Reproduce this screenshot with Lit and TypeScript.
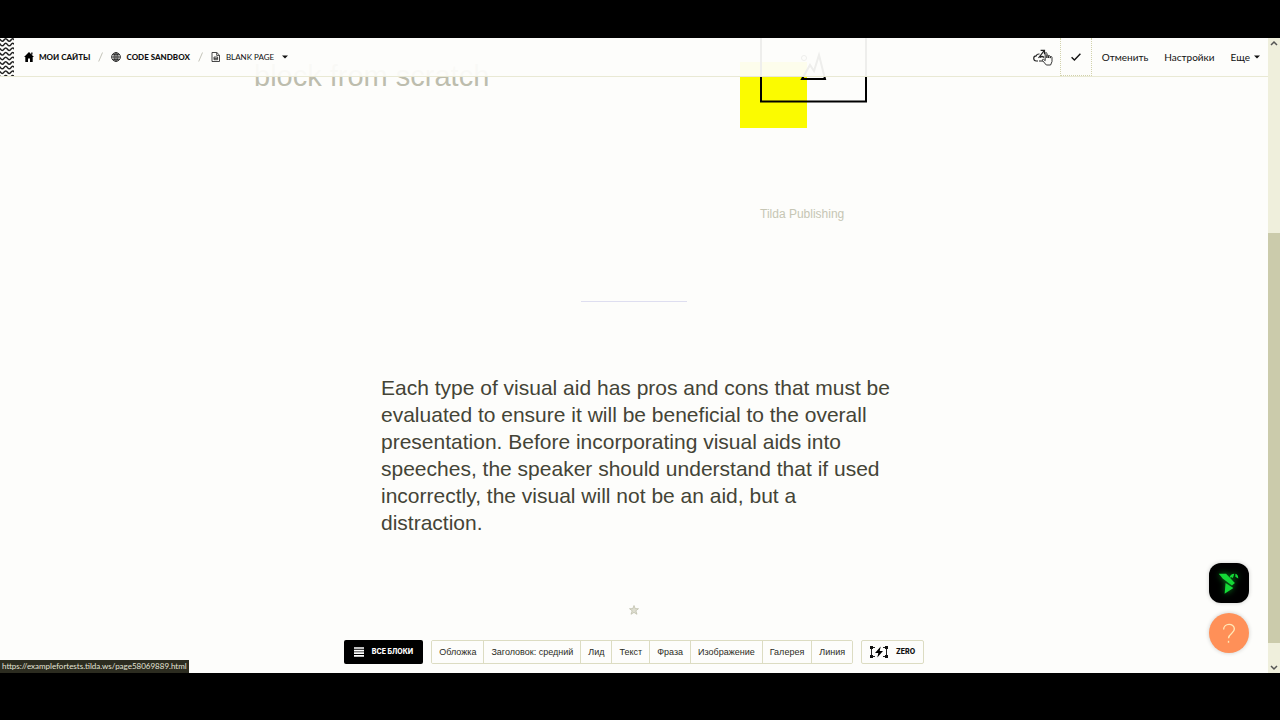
import { LitElement, html, css, svg } from "lit";
import { customElement } from "lit/decorators.js";

const BLOCKS = ["Обложка", "Заголовок: средний", "Лид", "Текст", "Фраза", "Изображение", "Галерея", "Линия"];

@customElement("top-bar")
class TopBar extends LitElement {
  static styles = css`
    :host { display: flex; align-items: stretch; height: 39px; background: rgba(253, 253, 251, 0.94); border-bottom: 1px solid #e9e9d4; box-sizing: border-box; font-family: Lato, "Open Sans", sans-serif; color: #111; }
    .waves { width: 14px; flex: none; }
    .crumbs { display: flex; align-items: center; padding-left: 10px; flex: 1; font-size: 8px; line-height: 12px; }
    a { color: inherit; text-decoration: none; display: flex; align-items: center; gap: 5px; text-transform: uppercase; }
    .strong { font-weight: 900; }
    .slash { width: 5px; height: 10px; margin: 0 8px; }
    button { font: inherit; color: inherit; background: none; border: 0; padding: 0; display: flex; align-items: center; justify-content: center; gap: 4px; }
    .pick { margin-left: 8px; }
    .actions { display: flex; align-items: stretch; font-size: 10px; line-height: 14px; padding-right: 8px; }
    .publish { width: 27px; justify-content: flex-start; }
    .done { width: 32px; border: 1px dotted #d2d2ac; border-top: 0; box-sizing: border-box; margin-right: 10px; }
    .menu { display: flex; gap: 16px; }
    svg { display: block; flex: none; }
  `;
  render() {
    const caret = html`<svg width="6" height="4" viewBox="0 0 6 4"><path d="M0 .5h6L3 3.5z" fill="#111"/></svg>`;
    const slash = html`<svg class="slash" viewBox="0 0 5 10"><path d="M.7 9.5L4.5.5" stroke="#b5b5a8" stroke-width=".8"/></svg>`;
    const rows = [...Array(9).keys()].map((i) => svg`<path d="M-3 ${i * 4.6 + 3}q1.700-3.500 3.500-1t3.500 0 3.500 0 3.500 0 3.500 0 3.500 0" />`);
    return html`
      <svg class="waves" viewBox="0 0 14 38" preserveAspectRatio="none"><g fill="none" stroke="#222" stroke-width="1.5">${rows}</g></svg>
      <nav class="crumbs">
        <a class="strong" href="#"><svg width="10" height="10" viewBox="0 0 10 10"><path d="M5 0l5 5H8.700v5H6V6.600H4V10H1.300V5H0zM7.200.6h1.300v2H7.200z" fill="#000"/></svg>Мои сайты</a>
        ${slash}
        <a class="strong" href="#"><svg width="10" height="10" viewBox="0 0 10 10" fill="none" stroke="#222" stroke-width=".9"><circle cx="5" cy="5" r="4.400"/><ellipse cx="5" cy="5" rx="2" ry="4.400"/><path d="M5 .6v8.800M.6 5h8.800M1.300 2.700h7.400M1.300 7.300h7.400"/></svg>Code sandbox</a>
        ${slash}
        <a href="#"><svg width="10" height="10" viewBox="0 0 10 10" fill="none" stroke="#333" stroke-width=".9"><path d="M1 .5h4.800l2.700 2.700v6.300H1zM5.700.6v2.800h2.700"/><path d="M3 5h3.600v2.700H3zM3 6.400h3.600"/></svg>Blank page</a>
        <button class="pick" aria-label="Выбрать страницу">${caret}</button>
      </nav>
      <div class="actions">
        <button class="publish" aria-label="Опубликовать">
          <svg width="22" height="20" viewBox="0 0 22 20" fill="none" stroke="#222" stroke-width="1.200">
            <path d="M5 14H3.500a2.600 2.600 0 0 1-.3-5.200Q4 6.800 6.500 7M5.500 11L11 3.800M7.600 3.300H11.500V7.200M6 14h4M7 10.500q2-2 4 0"/>
            <path d="M13.300 18l-3.800-4.500c-.6-1 .6-1.600 1.300-1l1.400 1.200V6.500c0-1.300 1.700-1.300 1.700 0V11 8.700c0-1 1.700-1 1.700.2V11 9.400c0-1 1.700-1 1.700.2v1.500-.9c0-1 1.700-1 1.700.3v4L17.600 18z" fill="#fdfdfb" stroke-width=".9"/>
          </svg>
        </button>
        <button class="done" aria-label="Готово"><svg width="10" height="8" viewBox="0 0 10 8"><path d="M.6 4.300l2.800 2.600L9.400.8" fill="none" stroke="#111" stroke-width="1.400"/></svg></button>
        <div class="menu">
          <button>Отменить</button>
          <button>Настройки</button>
          <button>Еще ${caret}</button>
        </div>
      </div>`;
  }
}

@customElement("block-bar")
class BlockBar extends LitElement {
  static styles = css`
    :host { display: flex; justify-content: center; gap: 8px; font-family: "Liberation Sans", sans-serif; font-size: 9px; line-height: 12px; }
    button { font: inherit; color: #2c2c24; background: #fdfdfb; border: 0; margin: 0; height: 22px; padding: 0 7px; display: flex; align-items: center; white-space: nowrap; }
    .group { display: flex; border: 1px solid #dcdcc2; border-radius: 2px; overflow: hidden; }
    .group button + button { border-left: 1px solid #dcdcc2; }
    .all, .zero { height: 24px; border-radius: 2px; font-family: Inter, sans-serif; font-weight: 800; font-size: 7px; text-transform: uppercase; }
    .all { background: #000; color: #fff; gap: 8px; padding: 0 10px; }
    .zero { border: 1px solid #dcdcc2; color: #111; gap: 8px; padding: 0 8px; }
  `;
  render() {
    return html`
      <button class="all"><svg width="10" height="10" viewBox="0 0 10 10"><path d="M0 1h10M0 3.600h10M0 6.200h10M0 8.800h10" stroke="#fff" stroke-width="1.700"/></svg>Все блоки</button>
      <div class="group">${BLOCKS.map((b) => html`<button>${b}</button>`)}</div>
      <button class="zero">
        <svg width="18" height="12" viewBox="0 0 18 12"><path d="M1.500 4V1.500H5M1.500 8v2.500H5M13 1.500h3.500V4M13 10.500h3.500V8M1.500 4v4M16.500 4v4" fill="none" stroke="#222" stroke-width="1"/><path d="M0 0h3v3H0zM15 0h3v3h-3zM0 9h3v3H0zM15 9h3v3h-3z" fill="#111"/><path d="M10.700 .5L5 7h3.300L7.300 11.500 13 5H9.700z" fill="#000"/></svg>Zero
      </button>`;
  }
}

@customElement("app-root")
class AppRoot extends LitElement {
  static styles = css`
    :host { display: flex; flex-direction: column; min-height: 100vh; box-sizing: border-box; padding: 38px 0 47px; background: #000; font-family: "Liberation Sans", sans-serif; }
    .stage { position: relative; flex: 1; display: flex; background: #fdfdfb; overflow: hidden; }
    .page { flex: 1; display: flex; flex-direction: column; align-items: center; min-width: 0; }
    top-bar { position: absolute; top: 0; left: 0; right: 12px; }
    .hero { width: 100%; max-width: 760px; display: grid; grid-template-columns: 1fr 274px; }
    h1 { margin: 0; padding-top: 21px; font-weight: 400; font-size: 29px; line-height: 34px; color: #bdbdae; }
    figure { margin: 0; }
    .art { display: block; }
    figcaption { padding: 78px 0 0 20px; font-size: 12px; line-height: 16px; color: #c6c6b4; }
    hr { width: 106px; margin: 79px 0 72px; border: 0; border-top: 1px solid #dedef0; }
    p { margin: 0; width: 100%; max-width: 516px; box-sizing: border-box; padding-left: 5px; font-size: 21px; line-height: 27px; color: #444436; }
    .star { margin-top: 69px; }
    block-bar { margin-top: auto; padding: 24px 0 9px; }
    .scroll { width: 12px; flex: none; display: flex; flex-direction: column; background: #efefdc; }
    .scroll svg { display: block; }
    .gap { flex: 182; }
    .thumb { flex: 410; background: #cbcbab; }
    .rest { flex: 18; }
    .status { position: absolute; left: 0; bottom: 0; padding: 0 2px; background: #2c2c20; color: #e4e4d8; font-family: Lato, "Open Sans", sans-serif; font-size: 8px; line-height: 13px; text-decoration: none; }
    .float { position: absolute; right: 31px; bottom: 20px; display: flex; flex-direction: column; gap: 10px; }
    .float button { width: 40px; height: 40px; padding: 0; border: 0; display: block; }
    .bird { background: #000; border-radius: 12px; box-shadow: 0 0 4px rgba(0, 0, 0, 0.2); }
    .help { background: #ff9058; border-radius: 50%; box-shadow: 0 0 4px rgba(0, 0, 0, 0.2); }
    .float svg { display: block; }
    .glow { filter: drop-shadow(0 0 3px #0b8a20); }
  `;
  render() {
    return html`
      <div class="stage">
        <main class="page">
          <section class="hero">
            <h1>block from scratch</h1>
            <figure>
              <svg class="art" width="128" height="90" viewBox="0 0 128 90">
                <path d="M0 24h67v66H0z" fill="#fbfb00"/>
                <path d="M21 0v63.500h105V0" fill="none" stroke="#000" stroke-width="2"/>
                <path d="M62 41l8-14 4 6 5-16 6 24z" fill="none" stroke="#000" stroke-width="2"/>
                <circle cx="64" cy="20" r="2.500" fill="none" stroke="#000"/>
              </svg>
              <figcaption>Tilda Publishing</figcaption>
            </figure>
          </section>
          <hr />
          <p>Each type of visual aid has pros and cons that must be evaluated to ensure it will be beneficial to the overall presentation. Before incorporating visual aids into speeches, the speaker should understand that if used incorrectly, the visual will not be an aid, but a distraction.</p>
          <svg class="star" width="10" height="10" viewBox="0 0 10 10"><path d="M5 .5l1.200 3.100 3.300.1L6.900 5.800 8 9.300 5 7.400 2 9.300l1.100-3.500L.5 3.700l3.300-.1z" fill="#deded0" stroke="#bcbca8" stroke-width=".7"/></svg>
          <block-bar></block-bar>
        </main>
        <div class="scroll" aria-hidden="true">
          <svg width="12" height="13" viewBox="0 0 12 13"><path d="M3 7l3-3 3 3" fill="none" stroke="#555" stroke-width="1.500"/></svg>
          <div class="gap"></div><div class="thumb"></div><div class="rest"></div>
          <svg width="12" height="12" viewBox="0 0 12 12"><path d="M3 5l3 3 3-3" fill="none" stroke="#555" stroke-width="1.500"/></svg>
        </div>
        <top-bar></top-bar>
        <div class="float">
          <button class="bird" aria-label="Расширение">
            <svg width="40" height="40" viewBox="0 0 41 41"><g class="glow" fill="#14d936"><path d="M10 11h7.500l9 9.500-3 2.500L14 16z"/><path d="M17 20.500l8 5-9 6z"/><path d="M21 15q1-4 5-4l-1.500 4.500-1.500-1zM27 11q3 .5 3 5l-3-2z"/></g></svg>
          </button>
          <button class="help" aria-label="Помощь">
            <svg width="40" height="40" viewBox="0 0 41 41" fill="none" stroke="#ffe9b8" stroke-width="1.400"><path d="M15 17c0-7 11-7 11-.5 0 4.500-6 4.500-6 9.500"/><path d="M20 28.500v2"/></svg>
          </button>
        </div>
        <a class="status" href="https://examplefortests.tilda.ws/page58069889.html">https://examplefortests.tilda.ws/page58069889.html</a>
      </div>`;
  }
}
